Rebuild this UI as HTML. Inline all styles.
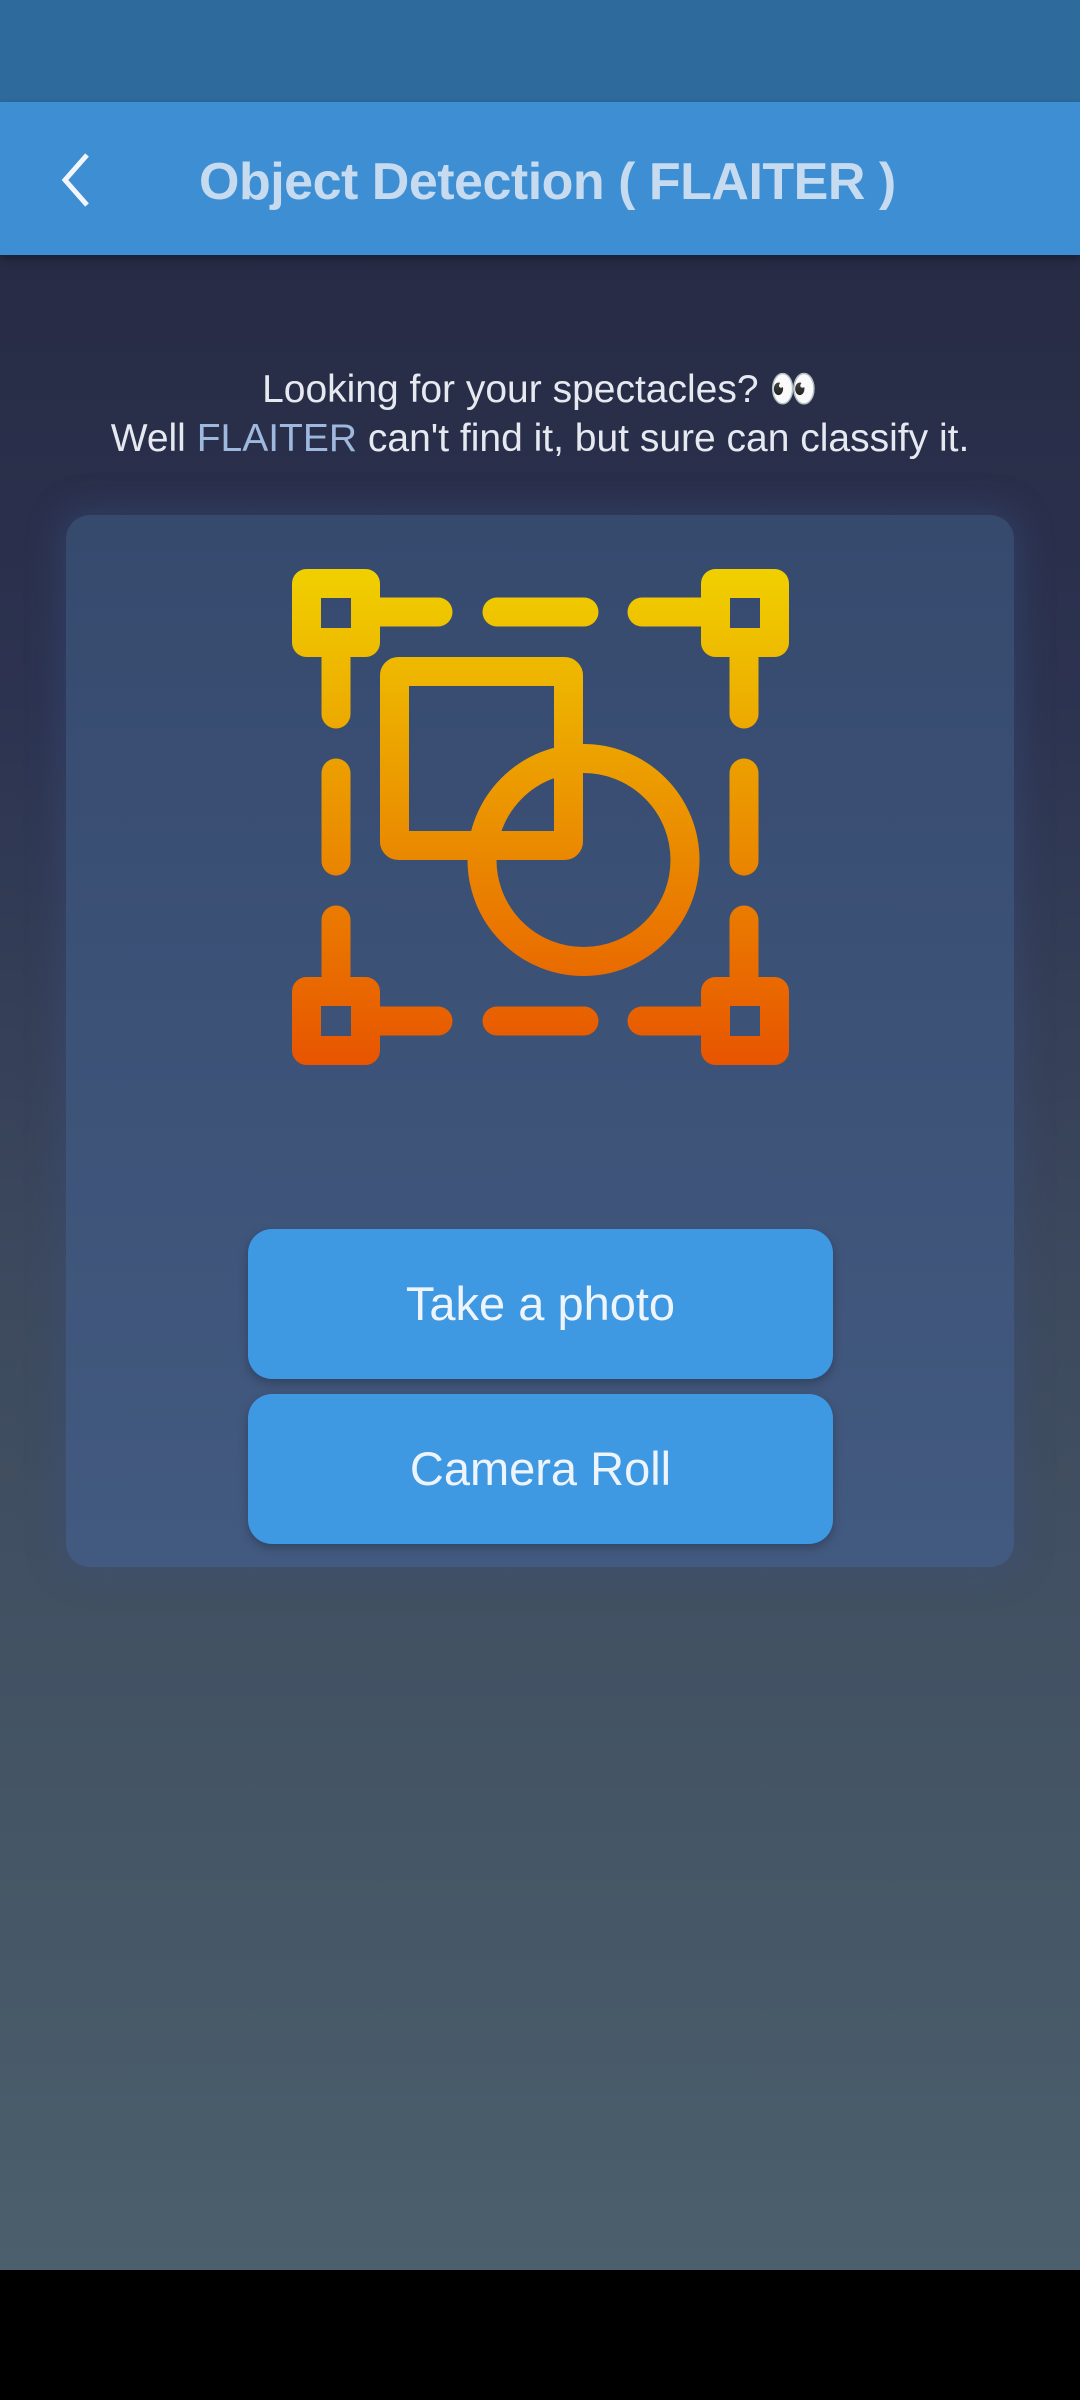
<!DOCTYPE html>
<html><head><meta charset="utf-8"><style>
*{margin:0;padding:0;box-sizing:border-box}
body{width:1080px;height:2400px;overflow:hidden;position:relative;font-family:"Liberation Sans",sans-serif;background:linear-gradient(#272b45 255px,#2c3350 700px,#3d4a5e 1300px,#4b5f6c 2270px)}
.status{position:absolute;left:0;top:0;width:1080px;height:102px;background:#2e6a9c}
.bar{position:absolute;left:0;top:102px;width:1080px;height:153px;background:#3d8ed2;box-shadow:0 4px 8px rgba(0,0,0,.3)}
.title{position:absolute;left:199px;top:50px;font-size:52px;font-weight:bold;color:#c6dbef;white-space:nowrap;letter-spacing:-0.5px}
.txt{position:absolute;left:0;width:1080px;text-align:center;color:#e6e9f0;font-size:39px;line-height:50px}
.card{position:absolute;left:66px;top:515px;width:948px;height:1052px;border-radius:24px;background:linear-gradient(#364a6e,#435a80);box-shadow:0 0 30px 10px rgba(60,80,130,.35)}
.btn{position:absolute;left:248px;width:585px;height:150px;border-radius:24px;background:#3e98e2;color:#eef4fb;font-size:47px;text-align:center;line-height:150px;box-shadow:0 4px 10px rgba(0,0,0,.25)}
.nav{position:absolute;left:0;top:2270px;width:1080px;height:130px;background:#000}
</style></head><body>
<div class="status"></div>
<div class="bar">
<svg style="position:absolute;left:55px;top:48px" width="50" height="60" viewBox="0 0 50 60"><path d="M32 5 L10 30 L32 55" fill="none" stroke="#f2f6fb" stroke-width="5"/></svg>
<div class="title">Object Detection ( FLAITER )</div>
</div>
<div class="txt" style="top:365px">Looking for your spectacles? 👀</div>
<div class="txt" style="top:414px">Well <span style="color:#9fb9de">FLAITER</span> can't find it, but sure can classify it.</div>
<div class="card"></div>
<svg style="position:absolute;left:0;top:0" width="1080" height="1200">
<defs><linearGradient id="g" gradientUnits="userSpaceOnUse" x1="0" y1="569" x2="0" y2="1063"><stop offset="0" stop-color="#f0d000"/><stop offset="0.5" stop-color="#eb9200"/><stop offset="1" stop-color="#e85500"/></linearGradient></defs>
<g fill="none" stroke="url(#g)" stroke-width="29" stroke-linecap="round" stroke-linejoin="round">
<rect x="306.5" y="583.5" width="59" height="59"/>
<rect x="715.5" y="583.5" width="59" height="59"/>
<rect x="306.5" y="991.5" width="59" height="59"/>
<rect x="715.5" y="991.5" width="59" height="59"/>
<path d="M380 612H438M497 612H584M642 612H700M380 1021H438M497 1021H584M642 1021H700M336 656V714M336 773V861M336 920V977M744 656V714M744 773V861M744 920V977"/>
<rect x="394.5" y="671.5" width="174" height="174" rx="4"/>
<circle cx="583.5" cy="860" r="101.5"/>
</g></svg>
<div class="btn" style="top:1229px">Take a photo</div>
<div class="btn" style="top:1394px">Camera Roll</div>
<div class="nav"></div>
</body></html>
